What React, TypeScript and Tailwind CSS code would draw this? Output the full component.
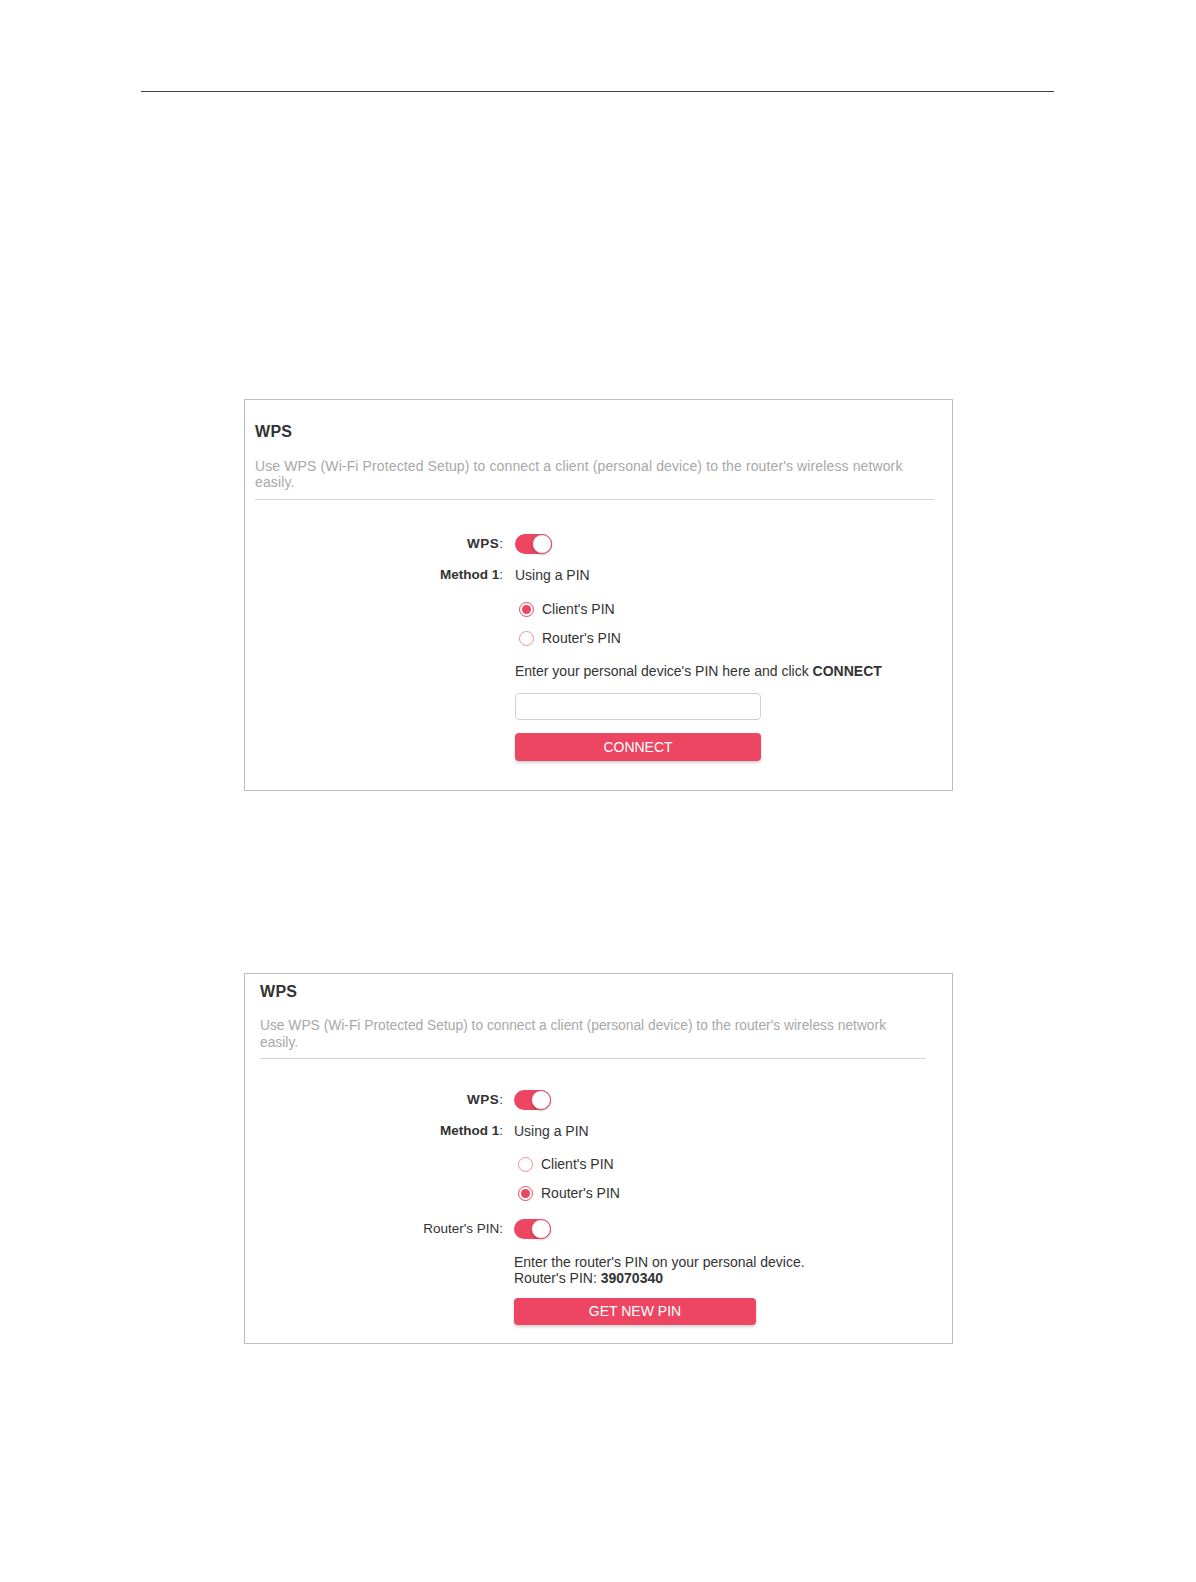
import React from "react";

const RED = "bg-[#ec4662]";

function Toggle() {
  return (
    <div className={`relative w-[37px] h-[20px] rounded-full ${RED}`}>
      <div className="absolute right-0 top-0 w-[20px] h-[20px] rounded-full bg-white border border-[#ec4662] shadow-[0_1px_2px_rgba(0,0,0,0.25)]" />
    </div>
  );
}

function Radio({ checked }: { checked: boolean }) {
  return (
    <div
      className={`w-[15px] h-[15px] rounded-full border flex items-center justify-center ${
        checked ? "border-[#ec4662]" : "border-[#ef8f9f]"
      }`}
    >
      {checked && <div className="w-[9px] h-[9px] rounded-full bg-[#ec4662]" />}
    </div>
  );
}

function Label({ children, w }: { children: React.ReactNode; w: string }) {
  return <div className={`${w} shrink-0 text-right text-[13.5px] text-[#333]`}>{children}</div>;
}

export default function App() {
  return (
    <div
      className="w-[1196px] h-[1582px] bg-white pt-[91px]"
      style={{ fontFamily: '"Liberation Sans", Arial, sans-serif' }}
    >
      <div className="ml-[141px] w-[913px] h-px bg-[#444]" />

      {/* Box 1 */}
      <div className="ml-[244px] mt-[307px] w-[709px] h-[392px] border border-[#bdbdbd] pl-[10px] pr-[18px] pt-[22px]">
        <div className="text-[16px] leading-[20px] font-bold text-[#333] tracking-[0.3px]">WPS</div>
        <div className="mt-[16px] text-[14px] leading-[16px] tracking-[0.12px] text-[#a8a8a8]">
          Use WPS (Wi-Fi Protected Setup) to connect a client (personal device) to the router's wireless network easily.
        </div>
        <div className="mt-[9px] h-px bg-[#d4d4d4]" />

        <div className="mt-[34px] flex items-center h-[20px]">
          <Label w="w-[248px]">
            <span className="font-bold tracking-[0.5px]">WPS</span>:
          </Label>
          <div className="ml-[12px]">
            <Toggle />
          </div>
        </div>

        <div className="mt-[11px] flex items-center h-[20px]">
          <Label w="w-[248px]">
            <span className="font-bold">Method 1</span>:
          </Label>
          <div className="ml-[12px] text-[14px] text-[#333]">Using a PIN</div>
        </div>

        <div className="mt-[14px] flex items-center h-[20px] ml-[264px]">
          <Radio checked />
          <span className="ml-[8px] text-[14px] text-[#333]">Client's PIN</span>
        </div>
        <div className="mt-[9px] flex items-center h-[20px] ml-[264px]">
          <Radio checked={false} />
          <span className="ml-[8px] text-[14px] text-[#333]">Router's PIN</span>
        </div>

        <div className="mt-[13px] ml-[260px] h-[20px] flex items-center text-[14px] text-[#333]">
          <span>
            Enter your personal device's PIN here and click <span className="font-bold">CONNECT</span>
          </span>
        </div>

        <div className="mt-[12px] ml-[260px] w-[246px] h-[27px] rounded-[4px] border border-[#d0d0d0] bg-white" />

        <div className="mt-[13px] ml-[260px] w-[246px] h-[28px] rounded-[4px] bg-[#ec4662] shadow-[0_2px_3px_rgba(0,0,0,0.18)] flex items-center justify-center text-white text-[14px]">
          CONNECT
        </div>
      </div>

      {/* Box 2 */}
      <div className="ml-[244px] mt-[182px] w-[709px] h-[371px] border border-[#bdbdbd] pl-[15px] pr-[26px] pt-[8px]">
        <div className="text-[16px] leading-[20px] font-bold text-[#333] tracking-[0.3px]">WPS</div>
        <div className="mt-[15px] text-[13.8px] leading-[17px] text-[#a8a8a8]">
          Use WPS (Wi-Fi Protected Setup) to connect a client (personal device) to the router's wireless network easily.
        </div>
        <div className="mt-[7px] h-px bg-[#d4d4d4]" />

        <div className="mt-[31px] flex items-center h-[20px]">
          <Label w="w-[243px]">
            <span className="font-bold tracking-[0.5px]">WPS</span>:
          </Label>
          <div className="ml-[11px]">
            <Toggle />
          </div>
        </div>

        <div className="mt-[11px] flex items-center h-[20px]">
          <Label w="w-[243px]">
            <span className="font-bold">Method 1</span>:
          </Label>
          <div className="ml-[11px] text-[14px] text-[#333]">Using a PIN</div>
        </div>

        <div className="mt-[13px] flex items-center h-[20px] ml-[258px]">
          <Radio checked={false} />
          <span className="ml-[8px] text-[14px] text-[#333]">Client's PIN</span>
        </div>
        <div className="mt-[9px] flex items-center h-[20px] ml-[258px]">
          <Radio checked />
          <span className="ml-[8px] text-[14px] text-[#333]">Router's PIN</span>
        </div>

        <div className="mt-[16px] flex items-center h-[20px]">
          <Label w="w-[243px]">Router's PIN:</Label>
          <div className="ml-[11px]">
            <Toggle />
          </div>
        </div>

        <div className="mt-[15px] ml-[254px] text-[14px] leading-[16px] text-[#333]">
          <div>Enter the router's PIN on your personal device.</div>
          <div>
            Router's PIN: <span className="font-bold">39070340</span>
          </div>
        </div>

        <div className="mt-[12px] ml-[254px] w-[242px] h-[27px] rounded-[4px] bg-[#ec4662] shadow-[0_2px_3px_rgba(0,0,0,0.18)] flex items-center justify-center text-white text-[14px]">
          GET NEW PIN
        </div>
      </div>
    </div>
  );
}
